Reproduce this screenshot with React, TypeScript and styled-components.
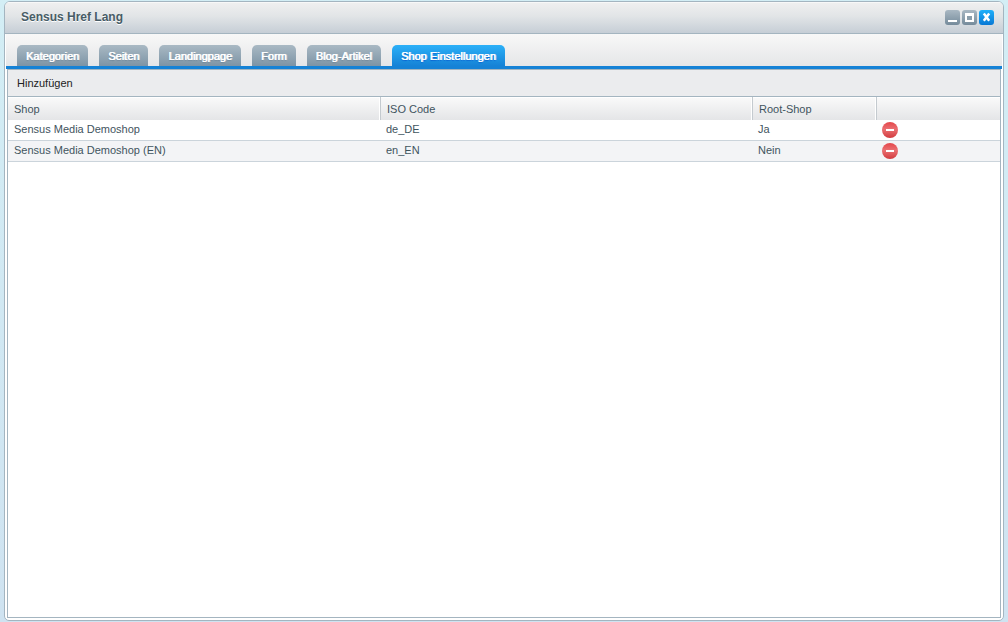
import React, { useState } from "react";
import styled, { createGlobalStyle } from "styled-components";

const GlobalStyle = createGlobalStyle`
  *, *::before, *::after { box-sizing: border-box; }
  body {
    margin: 0;
    background: linear-gradient(#d3eef5, #cfe3f1);
    font-family: "Liberation Sans", Arial, sans-serif;
    font-size: 11px;
    color: #3f545e;
  }
  button { font: inherit; color: inherit; border: 0; padding: 0; background: none; }
`;

const Desktop = styled.div`
  display: flex;
  min-height: 100vh;
  padding: 1px 4px;
`;

const Window = styled.section`
  flex: 1;
  display: flex;
  flex-direction: column;
  border: 1px solid #a4b5c0;
  border-radius: 6px 6px 5px 5px;
  background: #fff;
  overflow: hidden;
`;

const TitleBar = styled.header`
  display: flex;
  align-items: center;
  justify-content: space-between;
  height: 32px;
  padding: 0 9px 0 16px;
  border-bottom: 1px solid #a4b5c0;
  background: linear-gradient(#f0f0f0, #e2e5e7 45%, #c6ced6);
  box-shadow: inset 0 1px #f8f8f8;
`;

const Title = styled.h1`
  margin: 0;
  padding-bottom: 1px;
  font-size: 12px;
  line-height: 16px;
  color: #475c66;
  text-shadow: 0 1px #fff;
`;

const WindowTools = styled.div`
  display: flex;
  gap: 2px;
`;

const ToolButton = styled.button<{ $accent?: boolean }>`
  width: 15px;
  height: 15px;
  border-radius: 3px;
  background: ${(p) => (p.$accent ? "linear-gradient(#1fb0fa, #0878d4)" : "linear-gradient(#a9b8c3, #758b9b)")};
  svg { display: block; }
`;

const Tabs = styled.nav`
  display: flex;
  align-items: flex-end;
  gap: 11px;
  height: 35px;
  margin: 0 1px;
  padding: 0 11px;
  border-bottom: 3px solid #1582d6;
  background: linear-gradient(#f8f8f8, #e5e6e8);
`;

const Tab = styled.button<{ $active: boolean }>`
  height: 21px;
  padding: 0 9px;
  border-radius: 5px 5px 0 0;
  line-height: 16px;
  white-space: nowrap;
  color: #fff;
  text-shadow: 0 0 #fff, 1px 0 #ffffffaa, 0 1px 1px ${(p) => (p.$active ? "#0a5fd0" : "#6f879a")};
  background: ${(p) => (p.$active ? "linear-gradient(#2bb0f8, #1582d6)" : "linear-gradient(#a9b9c4, #7d94a5)")};
`;

const Panel = styled.main`
  flex: 1;
  margin: 0 2px 2px;
  border: 1px solid #a4b5c0;
  background: #fff;
`;

const Toolbar = styled.div`
  display: flex;
  align-items: center;
  height: 27px;
  padding: 0 9px;
  border-bottom: 1px solid #a4b5c0;
  background: #ebecee;
  color: #222;
`;

const Grid = styled.table`
  width: 100%;
  table-layout: fixed;
  border-collapse: separate;
  border-spacing: 0;
`;

const Column = styled.col<{ $width?: number }>`
  width: ${(p) => (p.$width ? `${p.$width}px` : "auto")};
`;

const HeadCell = styled.th`
  height: 23px;
  padding: 0 6px;
  border-left: 1px solid #c4cacf;
  background: linear-gradient(#fafafa, #e4e5e7);
  box-shadow: inset 0 1px #fff, inset -1px 0 #fff;
  font-weight: normal;
  line-height: 16px;
  text-align: left;
  &:first-child { border-left: 0; }
  &:last-child { box-shadow: inset 0 1px #fff; }
`;

const Row = styled.tr`
  background: #fff;
  &:nth-child(even) { background: #f3f4f6; }
`;

const Cell = styled.td`
  height: 21px;
  padding: 0 6px 2px;
  border-bottom: 1px solid #cbd4db;
  line-height: 16px;
`;

const ActionCell = styled(Cell)`
  padding-bottom: 0;
`;

const RemoveButton = styled.button`
  display: block;
  width: 16px;
  height: 16px;
  svg { display: block; }
`;

const MinimizeIcon = () => (
  <svg width="15" height="15" viewBox="0 0 15 15"><path d="M3 10h9v2H3z" fill="#fff" /></svg>
);

const MaximizeIcon = () => (
  <svg width="15" height="15" viewBox="0 0 15 15">
    <path d="M3 3h9v9H3z" fill="#fff" />
    <path d="M5 6h5v4H5z" fill="#8b9eab" />
  </svg>
);

const CloseIcon = () => (
  <svg width="15" height="15" viewBox="0 0 15 15">
    <path d="M4.8 3.4l5.4 7.4M10.2 3.4L4.8 10.8" stroke="#fff" strokeWidth="2.5" />
  </svg>
);

const RemoveIcon = () => (
  <svg width="16" height="16" viewBox="0 0 16 16">
    <defs>
      <linearGradient id="remove-fill" x1="0" y1="0" x2="0" y2="1">
        <stop offset="0" stopColor="#e4474b" />
        <stop offset=".45" stopColor="#ea7072" />
        <stop offset="1" stopColor="#d23b3e" />
      </linearGradient>
    </defs>
    <circle cx="8" cy="8" r="8" fill="url(#remove-fill)" />
    <path d="M4 7h8v2H4z" fill="#fff" />
  </svg>
);

const tabs = ["Kategorien", "Seiten", "Landingpage", "Form", "Blog-Artikel", "Shop Einstellungen"];

const shops = [
  { name: "Sensus Media Demoshop", iso: "de_DE", root: "Ja" },
  { name: "Sensus Media Demoshop (EN)", iso: "en_EN", root: "Nein" },
];

export default function App() {
  const [active, setActive] = useState("Shop Einstellungen");
  return (
    <>
      <GlobalStyle />
      <Desktop>
        <Window>
          <TitleBar>
            <Title>Sensus Href Lang</Title>
            <WindowTools>
              <ToolButton aria-label="Minimieren"><MinimizeIcon /></ToolButton>
              <ToolButton aria-label="Maximieren"><MaximizeIcon /></ToolButton>
              <ToolButton $accent aria-label="Schließen"><CloseIcon /></ToolButton>
            </WindowTools>
          </TitleBar>
          <Tabs>
            {tabs.map((t) => (
              <Tab key={t} $active={t === active} onClick={() => setActive(t)}>{t}</Tab>
            ))}
          </Tabs>
          <Panel>
            <Toolbar><button>Hinzufügen</button></Toolbar>
            <Grid>
              <colgroup>
                <Column $width={372} />
                <Column $width={372} />
                <Column $width={124} />
                <Column />
              </colgroup>
              <thead>
                <tr>
                  <HeadCell>Shop</HeadCell>
                  <HeadCell>ISO Code</HeadCell>
                  <HeadCell>Root-Shop</HeadCell>
                  <HeadCell aria-label="Aktionen" />
                </tr>
              </thead>
              <tbody>
                {shops.map((s) => (
                  <Row key={s.name}>
                    <Cell>{s.name}</Cell>
                    <Cell>{s.iso}</Cell>
                    <Cell>{s.root}</Cell>
                    <ActionCell>
                      <RemoveButton aria-label={`${s.name} entfernen`}><RemoveIcon /></RemoveButton>
                    </ActionCell>
                  </Row>
                ))}
              </tbody>
            </Grid>
          </Panel>
        </Window>
      </Desktop>
    </>
  );
}
